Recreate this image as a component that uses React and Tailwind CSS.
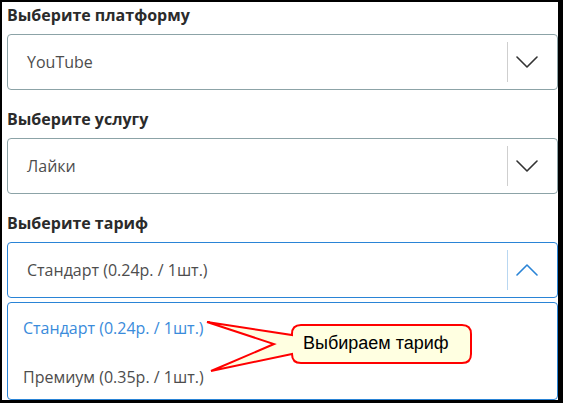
const Chevron = ({ up, color }) => (
  <svg width="22" height="12" viewBox="0 0 22 12" fill="none">
    <polyline
      points={up ? "1,11 11,1 21,11" : "1,1 11,11 21,1"}
      stroke={color}
      strokeWidth="1.6"
      strokeLinecap="round"
      strokeLinejoin="round"
    />
  </svg>
);

const Field = ({ label, value, open, last }) => (
  <div className={last ? "mb-[4px]" : "mb-[18px]"}>
    <div className="text-[16px] leading-[22px] font-bold text-[#2b2b2b] mb-[8px]">{label}</div>
    <div
      className={`h-[56px] flex items-center rounded-[4px] border pl-[19px] pr-[11px] ${
        open ? "border-[#2a84d6]" : "border-[#8ca3a7]"
      }`}
    >
      <span className="flex-1 text-[16px] text-[#4d4d4d]">{value}</span>
      <div className={`w-px h-[40px] ${open ? "bg-[#b9d7f1]" : "bg-[#cfcfcf]"}`} />
      <div className="w-[38px] flex justify-center">
        {open ? <Chevron up color="#2a84d6" /> : <Chevron color="#333333" />}
      </div>
    </div>
  </div>
);

export default function App() {
  return (
    <div className="relative w-[563px] h-[403px] bg-black pt-[2px] pl-[2px] pr-[5px] pb-[3px]">
      <div className="h-full bg-white pl-[5px] pt-[2px] overflow-hidden font-['Open_Sans',sans-serif]">
        <Field label="Выберите платформу" value="YouTube" />
        <Field label="Выберите услугу" value="Лайки" />
        <Field label="Выберите тариф" value="Стандарт (0.24р. / 1шт.)" open last />

        {/* dropdown list */}
        <div className="h-[98px] border border-[#2a84d6] rounded-[4px] text-[16px]">
          <div className="h-[49px] flex items-center pl-[15px] text-[#3a8bdb]">Стандарт (0.24р. / 1шт.)</div>
          <div className="h-[49px] flex items-center pl-[15px] text-[#4d4d4d]">Премиум (0.35р. / 1шт.)</div>
        </div>
      </div>

      {/* callout */}
      <svg className="absolute left-0 top-0 pointer-events-none" width="563" height="403">
        <path
          d="M301 325 H462 Q471 325 471 334 V354 Q471 363 462 363 H301 Q292 363 292 354 L211 371 L274 344 L207 322 L292 335 V334 Q292 325 301 325 Z"
          fill="#ffffe1"
          stroke="#ff0000"
          strokeWidth="2"
          strokeLinejoin="miter"
        />
      </svg>
      <div className="absolute left-[303px] top-[332px] text-[18px] leading-[22px] text-black font-['Liberation_Sans',Arial,sans-serif]">
        Выбираем тариф
      </div>
    </div>
  );
}
